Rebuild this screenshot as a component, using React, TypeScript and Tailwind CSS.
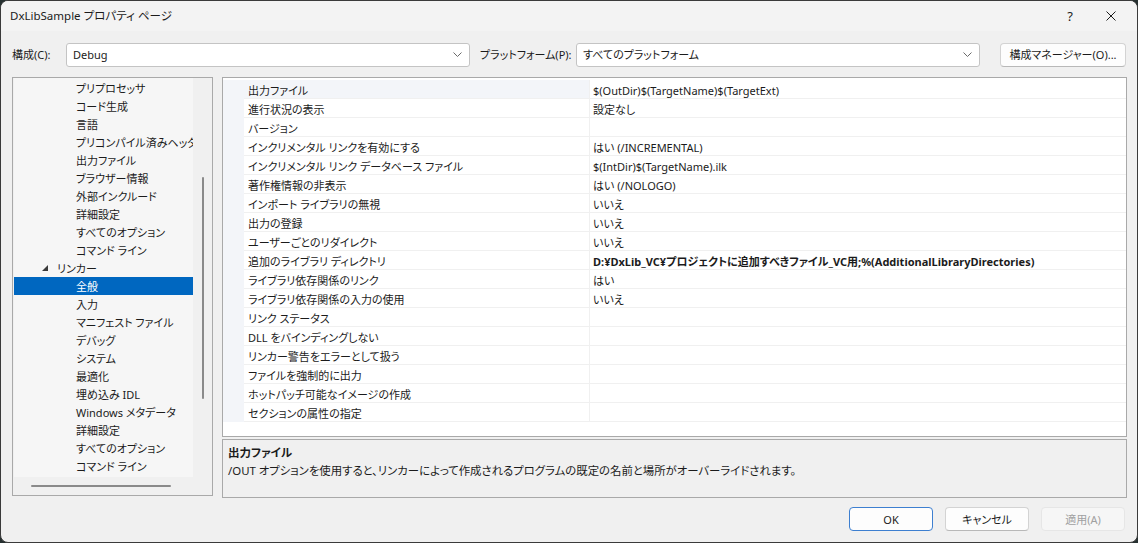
import React from 'react';

const font =
  "font-['Noto_Sans','Noto_Sans_CJK_JP',sans-serif] text-[11px] leading-none text-[#1b1b1b] [font-feature-settings:'palt']";

const treeItems: { label: string; level: 1 | 2; expanded?: boolean; selected?: boolean }[] = [
  { label: 'プリプロセッサ', level: 2 },
  { label: 'コード生成', level: 2 },
  { label: '言語', level: 2 },
  { label: 'プリコンパイル済みヘッダー', level: 2 },
  { label: '出力ファイル', level: 2 },
  { label: 'ブラウザー情報', level: 2 },
  { label: '外部インクルード', level: 2 },
  { label: '詳細設定', level: 2 },
  { label: 'すべてのオプション', level: 2 },
  { label: 'コマンド ライン', level: 2 },
  { label: 'リンカー', level: 1, expanded: true },
  { label: '全般', level: 2, selected: true },
  { label: '入力', level: 2 },
  { label: 'マニフェスト ファイル', level: 2 },
  { label: 'デバッグ', level: 2 },
  { label: 'システム', level: 2 },
  { label: '最適化', level: 2 },
  { label: '埋め込み IDL', level: 2 },
  { label: 'Windows メタデータ', level: 2 },
  { label: '詳細設定', level: 2 },
  { label: 'すべてのオプション', level: 2 },
  { label: 'コマンド ライン', level: 2 },
];

const props: { name: string; value?: string; bold?: boolean }[] = [
  { name: '出力ファイル', value: '$(OutDir)$(TargetName)$(TargetExt)' },
  { name: '進行状況の表示', value: '設定なし' },
  { name: 'バージョン' },
  { name: 'インクリメンタル リンクを有効にする', value: 'はい (/INCREMENTAL)' },
  { name: 'インクリメンタル リンク データベース ファイル', value: '$(IntDir)$(TargetName).ilk' },
  { name: '著作権情報の非表示', value: 'はい (/NOLOGO)' },
  { name: 'インポート ライブラリの無視', value: 'いいえ' },
  { name: '出力の登録', value: 'いいえ' },
  { name: 'ユーザーごとのリダイレクト', value: 'いいえ' },
  {
    name: '追加のライブラリ ディレクトリ',
    value: 'D:¥DxLib_VC¥プロジェクトに追加すべきファイル_VC用;%(AdditionalLibraryDirectories)',
    bold: true,
  },
  { name: 'ライブラリ依存関係のリンク', value: 'はい' },
  { name: 'ライブラリ依存関係の入力の使用', value: 'いいえ' },
  { name: 'リンク ステータス' },
  { name: 'DLL をバインディングしない' },
  { name: 'リンカー警告をエラーとして扱う' },
  { name: 'ファイルを強制的に出力' },
  { name: 'ホットパッチ可能なイメージの作成' },
  { name: 'セクションの属性の指定' },
];

function Chevron() {
  return (
    <svg width="9" height="5" viewBox="0 0 9 5" className="shrink-0">
      <polyline points="0.5,0.5 4.5,4.5 8.5,0.5" fill="none" stroke="#6a6a6a" strokeWidth="1" />
    </svg>
  );
}

function Select({ value }: { value: string }) {
  return (
    <div className="flex h-[24px] w-[404px] items-center rounded-[3px] border border-[#c4c4c4] bg-white pl-[6px] pr-[7px]">
      <span className="flex-1">{value}</span>
      <Chevron />
    </div>
  );
}

function DialogButton({ label, kind }: { label: string; kind: 'default' | 'normal' | 'disabled' }) {
  const styles =
    kind === 'default'
      ? 'border-[#3d7fd0] bg-[#fdfdfd] text-[#1b1b1b]'
      : kind === 'normal'
        ? 'border-[#d3d3d3] border-b-[#b8b8b8] bg-[#fdfdfd] text-[#1b1b1b]'
        : 'border-[#e6e6e6] bg-[#f6f6f6] text-[#a0a0a0]';
  return (
    <button className={`flex h-[24px] w-[84px] items-center justify-center rounded-[4px] border ${styles}`}>
      {label}
    </button>
  );
}

export default function App() {
  return (
    <div className={`h-[543px] w-[1138px] overflow-hidden bg-[#263030] ${font}`}>
      <div className="flex h-full flex-col overflow-hidden rounded-[8px] border border-[#3a3a3a] bg-[#f0f0f0]">
        {/* title bar */}
        <div className="flex h-[30px] shrink-0 items-center bg-[#f3f3f3] pl-[9px]">
          <span className="text-[11.5px]">DxLibSample プロパティ ページ</span>
          <div className="ml-auto flex h-full items-center">
            <span className="w-[42px] text-center text-[13px]">?</span>
            <div className="flex w-[46px] items-center justify-center pr-[6px]">
              <svg width="10" height="10" viewBox="0 0 10 10">
                <path d="M0.5 0.5 L9.5 9.5 M9.5 0.5 L0.5 9.5" stroke="#1b1b1b" strokeWidth="1" />
              </svg>
            </div>
          </div>
        </div>

        {/* configuration row */}
        <div className="mt-[11px] flex h-[25px] items-center pl-[11px]">
          <span className="w-[54px] whitespace-nowrap">構成(C):</span>
          <Select value="Debug" />
          <span className="ml-[10px] w-[96px] whitespace-nowrap">プラットフォーム(P):</span>
          <Select value="すべてのプラットフォーム" />
          <button className="ml-[20px] flex h-[24px] w-[126px] items-center justify-center whitespace-nowrap rounded-[4px] border border-[#d3d3d3] border-b-[#b8b8b8] bg-[#fdfdfd]">
            構成マネージャー(O)...
          </button>
        </div>

        {/* main */}
        <div className="mt-[10px] flex gap-[9px] pl-[11px]">
          {/* tree */}
          <div className="flex h-[419px] w-[201px] flex-col border border-[#a9a9a9]">
            <div className="flex h-[399px]">
              <div className="ml-[1px] h-full w-[179px] overflow-hidden bg-[#f6f6f6] pt-[1px]">
                {treeItems.map((it, i) => (
                  <div
                    key={i}
                    className={`flex h-[18px] items-center whitespace-nowrap ${
                      it.selected ? 'bg-[#0067c0] text-white' : ''
                    } ${it.level === 1 ? 'pl-[28px]' : 'pl-[62px]'}`}
                  >
                    {it.expanded && (
                      <svg width="6" height="6" viewBox="0 0 6 6" className="mr-[9px]">
                        <polygon points="6,0 6,6 0,6" fill="#3a3a3a" />
                      </svg>
                    )}
                    <span>{it.label}</span>
                  </div>
                ))}
              </div>
              <div className="flex flex-1 justify-center pl-[1px]">
                <div className="mt-[99px] h-[222px] w-[2px] rounded-full bg-[#8a8a8a]" />
              </div>
            </div>
            <div className="flex flex-1 items-center pl-[18px]">
              <div className="h-[2px] w-[140px] rounded-full bg-[#8a8a8a]" />
            </div>
          </div>

          {/* right side */}
          <div className="flex w-[905px] flex-col gap-[2px]">
            <div className="h-[360px] border border-[#a9a9a9] bg-white pt-[2px]">
              {props.map((p, i) => (
                <div key={i} className="flex h-[19px]">
                  <div className="w-[21px] shrink-0 bg-[#f3f5f9]" />
                  <div
                    className={`flex w-[346px] shrink-0 items-center whitespace-nowrap border-b border-r border-[#f0f0f0] pl-[4px] pt-[3px] ${
                      i === 0 ? 'bg-[#f3f5f9]' : ''
                    }`}
                  >
                    {p.name}
                  </div>
                  <div
                    className={`flex flex-1 items-center whitespace-nowrap border-b border-[#f0f0f0] pl-[3px] pt-[3px] ${
                      p.bold ? 'font-bold' : ''
                    }`}
                  >
                    {p.value ?? ''}
                  </div>
                </div>
              ))}
            </div>
            <div className="flex h-[59px] flex-col gap-[6px] border border-[#a9a9a9] bg-[#f0f0f0] pl-[5px] pt-[7px]">
              <span className="text-[11.5px] font-bold">出力ファイル</span>
              <span className="text-[11.4px]">
                /OUT オプションを使用すると、リンカーによって作成されるプログラムの既定の名前と場所がオーバーライドされます。
              </span>
            </div>
          </div>
        </div>

        {/* dialog buttons */}
        <div className="mt-[9px] flex justify-end gap-[12px] pr-[12px]">
          <DialogButton label="OK" kind="default" />
          <DialogButton label="キャンセル" kind="normal" />
          <DialogButton label="適用(A)" kind="disabled" />
        </div>
      </div>
    </div>
  );
}
